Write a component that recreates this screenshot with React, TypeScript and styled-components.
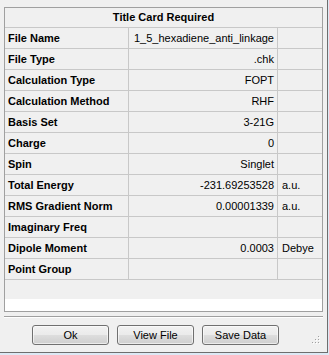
import React from "react"
import styled, { createGlobalStyle } from "styled-components"

interface Row {
  label: string
  value?: string
  unit?: string
}

const rows: Row[] = [
  { label: "File Name", value: "1_5_hexadiene_anti_linkage" },
  { label: "File Type", value: ".chk" },
  { label: "Calculation Type", value: "FOPT" },
  { label: "Calculation Method", value: "RHF" },
  { label: "Basis Set", value: "3-21G" },
  { label: "Charge", value: "0" },
  { label: "Spin", value: "Singlet" },
  { label: "Total Energy", value: "-231.69253528", unit: "a.u." },
  { label: "RMS Gradient Norm", value: "0.00001339", unit: "a.u." },
  { label: "Imaginary Freq" },
  { label: "Dipole Moment", value: "0.0003", unit: "Debye" },
  { label: "Point Group" },
]

const GlobalStyle = createGlobalStyle`
  html, body {
    margin: 0;
    padding: 0;
    background: #dde9f5;
  }
  body {
    font-family: "Liberation Sans", Arial, sans-serif;
    font-size: 11px;
    color: #000;
  }
`

const SizeGrip = () => (
  <GripSvg width="10" height="10" viewBox="0 0 10 10">
    {[
      [7, 1],
      [4, 4],
      [7, 4],
      [1, 7],
      [4, 7],
      [7, 7],
    ].map(([x, y]) => (
      <g key={`${x}-${y}`}>
        <rect x={x + 1} y={y + 1} width="1" height="1" fill="#ffffff" />
        <rect x={x} y={y} width="1" height="1" fill="#a0a0a0" />
      </g>
    ))}
  </GripSvg>
)

export default function App() {
  return (
    <>
      <GlobalStyle />
      <Window>
        <Grid>
          <Header>Title Card Required</Header>
          {rows.map((r) => (
            <GridRow key={r.label}>
              <Label>{r.label}</Label>
              <Value>{r.value}</Value>
              <Unit>{r.unit}</Unit>
            </GridRow>
          ))}
          <Filler />
          <WhiteStrip />
        </Grid>
        <Separator />
        <Buttons>
          <Button>Ok</Button>
          <Button>View File</Button>
          <Button>Save Data</Button>
        </Buttons>
        <SizeGrip />
      </Window>
    </>
  )
}

const Window = styled.div`
  position: relative;
  width: 327px;
  height: 352px;
  box-sizing: content-box;
  background: #f0f0f0;
  border-right: 1px solid #6e6e6e;
  border-bottom: 1px solid #6e6e6e;
  display: flex;
  flex-direction: column;
`

const Grid = styled.div`
  margin: 7px 4px 0 4px;
  width: 319px;
  height: 305px;
  box-sizing: border-box;
  border: 1px solid #a0a0a0;
  display: flex;
  flex-direction: column;
`

const Header = styled.div`
  height: 19px;
  line-height: 19px;
  border-bottom: 1px solid #c8c8c8;
  text-align: center;
  font-weight: bold;
  flex: none;
`

const GridRow = styled.div`
  display: grid;
  grid-template-columns: 124px 149px 44px;
  height: 21px;
  flex: none;
  box-sizing: border-box;
  border-bottom: 1px solid #c8c8c8;
`

const Cell = styled.div`
  line-height: 20px;
  white-space: nowrap;
  overflow: hidden;
  box-sizing: border-box;
`

const Label = styled(Cell)`
  font-weight: bold;
  padding-left: 3px;
  border-right: 1px solid #c8c8c8;
`

const Value = styled(Cell)`
  text-align: right;
  padding-right: 3px;
  border-right: 1px solid #c8c8c8;
`

const Unit = styled(Cell)`
  padding-left: 4px;
`

const Filler = styled.div`
  flex: 1;
`

const WhiteStrip = styled.div`
  height: 12px;
  background: #ffffff;
  flex: none;
`

const Separator = styled.div`
  margin: 4px 4px 0 4px;
  width: 319px;
  height: 1px;
  border-bottom: 1px solid #ffffff;
  background: #a0a0a0;
`

const Buttons = styled.div`
  display: flex;
  gap: 8px;
  padding-left: 32px;
  margin-top: 7px;
`

const Button = styled.button`
  width: 77px;
  height: 20px;
  box-sizing: border-box;
  border: 1px solid #707070;
  border-radius: 3px;
  background: linear-gradient(#f2f2f2 0%, #ebebeb 48%, #dddddd 52%, #cfcfcf 100%);
  font-family: "Liberation Sans", Arial, sans-serif;
  font-size: 11px;
  color: #000;
  padding: 0;
  box-shadow: inset 0 0 0 1px rgba(255, 255, 255, 0.6);
`

const GripSvg = styled.svg`
  position: absolute;
  right: 6px;
  bottom: 7px;
`
